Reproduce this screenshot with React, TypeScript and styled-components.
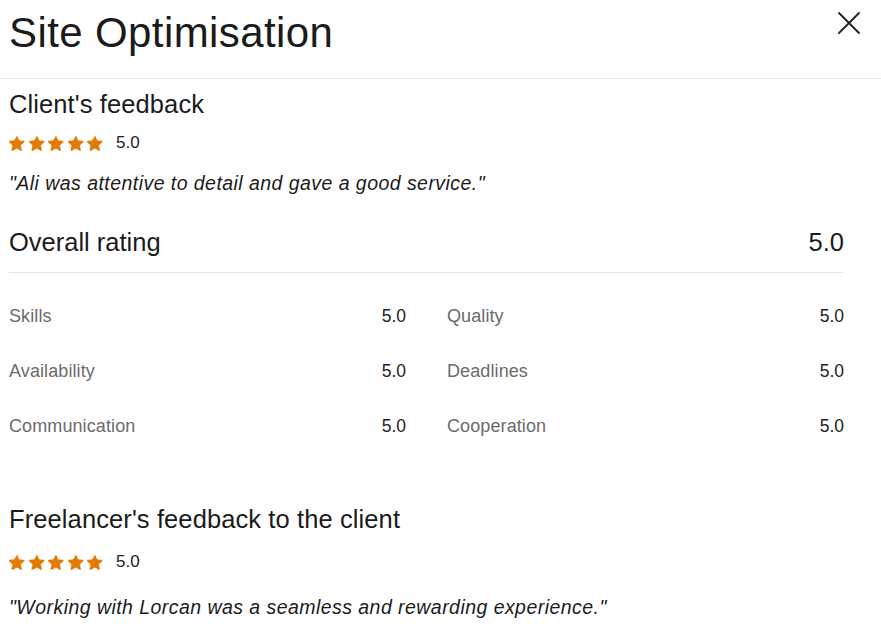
import React from "react";
import styled, { createGlobalStyle } from "styled-components";

const Global = createGlobalStyle`
  html, body { margin: 0; padding: 0; background: #ffffff; }
  body { font-family: "Liberation Sans", Arial, sans-serif; color: #1b1b1b; }
  * { box-sizing: border-box; }
`;

const Page = styled.div`
  width: 881px;
  height: 640px;
  overflow: hidden;
  background: #fff;
`;

const Header = styled.header`
  display: flex;
  justify-content: space-between;
  align-items: flex-start;
  height: 79px;
  padding: 8px 20px 0 9px;
  border-bottom: 1px solid #e6e6e6;
`;

const Title = styled.h1`
  margin: 0;
  font-size: 42px;
  line-height: 50px;
  font-weight: 400;
  letter-spacing: 0.4px;
  color: #1b1b1b;
`;

const CloseButton = styled.button`
  display: flex;
  margin-top: 3px;
  padding: 0;
  border: 0;
  background: transparent;
  cursor: pointer;
`;

const Body = styled.main`
  width: 844px;
  padding: 0 0 0 9px;
`;

const Section = styled.section<{ $top: number }>`
  display: flex;
  flex-direction: column;
  padding-top: ${(p) => p.$top}px;
`;

const Heading = styled.h2`
  margin: 0;
  font-size: 25.5px;
  line-height: 30px;
  font-weight: 400;
  letter-spacing: 0.1px;
  color: #1b1b1b;
`;

const StarRow = styled.div<{ $gap: number }>`
  display: flex;
  align-items: center;
  gap: 13px;
  height: 20px;
  margin-top: ${(p) => p.$gap}px;
`;

const Stars = styled.div`
  display: flex;
  gap: 3.5px;
`;

const Score = styled.span`
  font-size: 17px;
  color: #222;
`;

const Quote = styled.p<{ $gap: number }>`
  margin: ${(p) => p.$gap}px 0 0;
  font-size: 19.5px;
  line-height: 28px;
  font-style: italic;
  letter-spacing: 0.45px;
  color: #1b1b1b;
`;

const OverallRow = styled.div`
  display: flex;
  justify-content: space-between;
  align-items: center;
  margin-top: 30px;
  padding-bottom: 15px;
  border-bottom: 1px solid #e6e6e6;
  font-size: 25.5px;
  line-height: 30px;
  color: #1b1b1b;
`;

const Grid = styled.div`
  display: grid;
  grid-template-columns: 1fr 1fr;
  column-gap: 41px;
  row-gap: 31px;
  padding-top: 31px;
`;

const Metric = styled.div`
  display: flex;
  justify-content: space-between;
  align-items: center;
  font-size: 17.5px;
  line-height: 24px;
`;

const MetricLabel = styled.span`
  font-size: 18px;
  letter-spacing: 0.1px;
  color: #6b6b6b;
`;

const MetricValue = styled.span`
  color: #222;
`;

const Star = () => (
  <svg width="16" height="16" viewBox="0 0 24 24">
    <path
      d="M12 1.8l3.05 6.7 7.3.8c.6.07.85.8.4 1.2l-5.45 4.95 1.5 7.2c.12.6-.52 1.05-1.05.75L12 19.75l-6.75 3.65c-.53.3-1.17-.15-1.05-.75l1.5-7.2L.25 10.5c-.45-.4-.2-1.130.4-1.2l7.3-.8z"
      fill="#e17b06"
      stroke="#e17b06"
      strokeWidth="1"
      strokeLinejoin="round"
    />
  </svg>
);

const Rating = ({ gap }: { gap: number }) => (
  <StarRow $gap={gap}>
    <Stars>
      {[0, 1, 2, 3, 4].map((i) => (
        <Star key={i} />
      ))}
    </Stars>
    <Score>5.0</Score>
  </StarRow>
);

const metrics = [
  ["Skills", "5.0"],
  ["Quality", "5.0"],
  ["Availability", "5.0"],
  ["Deadlines", "5.0"],
  ["Communication", "5.0"],
  ["Cooperation", "5.0"],
];

export default function App() {
  return (
    <Page>
      <Global />
      <Header>
        <Title>Site Optimisation</Title>
        <CloseButton aria-label="Close">
          <svg width="24" height="24" viewBox="0 0 24 24">
            <path d="M2 2L22 22M22 2L2 22" stroke="#1f1f1f" strokeWidth="1.8" strokeLinecap="round" />
          </svg>
        </CloseButton>
      </Header>
      <Body>
        <Section $top={10}>
          <Heading>Client's feedback</Heading>
          <Rating gap={14} />
          <Quote $gap={16}>"Ali was attentive to detail and gave a good service."</Quote>
          <OverallRow>
            <span>Overall rating</span>
            <span>5.0</span>
          </OverallRow>
          <Grid>
            {metrics.map(([label, value]) => (
              <Metric key={label}>
                <MetricLabel>{label}</MetricLabel>
                <MetricValue>{value}</MetricValue>
              </Metric>
            ))}
          </Grid>
        </Section>
        <Section $top={66}>
          <Heading>Freelancer's feedback to the client</Heading>
          <Rating gap={18} />
          <Quote $gap={21}>"Working with Lorcan was a seamless and rewarding experience."</Quote>
        </Section>
      </Body>
    </Page>
  );
}
